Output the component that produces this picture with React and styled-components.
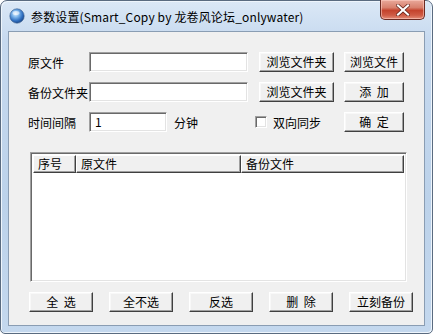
import React from 'react'
import styled, { createGlobalStyle } from 'styled-components'

const GlobalStyle = createGlobalStyle`
	html, body {
		margin: 0;
		padding: 0;
		background: #ffffff;
	}
	body {
		font-family: "Noto Sans CJK SC", "Liberation Sans", sans-serif;
		font-size: 12px;
		color: #000;
	}
`

const Frame = styled.div`
	box-sizing: border-box;
	width: 433px;
	height: 334px;
	display: flex;
	flex-direction: column;
	padding: 0 7px 7px 7px;
	border: 1px solid #5a6b80;
	border-radius: 7px 7px 5px 5px;
	background: linear-gradient(180deg, #dbe8f6 0%, #c6d9ef 12%, #bcd2ea 60%, #c4d8ee 100%);
	box-shadow: inset 1px 1px 0 #eef5fc, inset -1px -1px 0 #eef5fc;
`

const TitleBar = styled.div`
	display: flex;
	align-items: center;
	height: 30px;
	padding-left: 1px;
`

const AppIcon = styled.svg`
	width: 16px;
	height: 16px;
	flex-shrink: 0;
`

const Title = styled.div`
	margin-left: 6px;
	font-size: 12px;
	letter-spacing: 0.15px;
	color: #000;
	white-space: nowrap;
	flex: 1;
`

const CloseButton = styled.div`
	align-self: flex-start;
	margin-top: -1px;
	width: 45px;
	height: 20px;
	box-sizing: border-box;
	border: 1px solid #6b2a22;
	border-top: none;
	border-radius: 0 0 5px 5px;
	background: linear-gradient(180deg, #e9a99b 0%, #d8806d 40%, #c4432d 55%, #cf5b45 80%, #e48d78 100%);
	box-shadow: inset 0 0 0 1px rgba(255, 210, 200, 0.55);
	display: flex;
	align-items: center;
	justify-content: center;
`

const Client = styled.div`
	flex: 1;
	display: flex;
	flex-direction: column;
	background: #f0f0f0;
	border: 1px solid #8a9db3;
	padding: 20px 0 0 19px;
`

const Row = styled.div`
	display: flex;
	align-items: center;
	height: 20px;
	margin-bottom: 10px;
`

const Label = styled.div`
	width: ${p => p.w || 61}px;
	margin-left: ${p => p.ml || 0}px;
	flex-shrink: 0;
	white-space: nowrap;
`

const TextBox = styled.div`
	box-sizing: border-box;
	width: ${p => p.w}px;
	height: 20px;
	background: #fff;
	border: 1px solid;
	border-color: #a0a0a0 #ffffff #ffffff #a0a0a0;
	box-shadow: inset 1px 1px 0 #696969, inset -1px -1px 0 #e3e3e3;
	padding-left: 5px;
	line-height: 18px;
	flex-shrink: 0;
`

const Button = styled.div`
	box-sizing: border-box;
	width: ${p => p.w || 60}px;
	height: 20px;
	margin-left: ${p => p.ml || 0}px;
	flex-shrink: 0;
	background: #f0f0f0;
	border: 1px solid;
	border-color: #ffffff #404040 #404040 #ffffff;
	box-shadow: inset -1px -1px 0 #a0a0a0, inset 1px 1px 0 #f8f8f8;
	display: flex;
	align-items: center;
	justify-content: center;
	white-space: pre;
	word-spacing: 3px;
	line-height: 1;
`

const CheckLabel = styled.div`
	display: flex;
	align-items: center;
	gap: 6px;
	width: 89px;
	flex-shrink: 0;
`

const CheckBox = styled.span`
	box-sizing: border-box;
	width: 12px;
	height: 12px;
	background: #fff;
	border: 1px solid;
	border-color: #a0a0a0 #ffffff #ffffff #a0a0a0;
	box-shadow: inset 1px 1px 0 #696969, inset -1px -1px 0 #e3e3e3;
`

const ListView = styled.div`
	box-sizing: border-box;
	width: 377px;
	height: 130px;
	margin: 10px 0 0 2px;
	background: #fff;
	border: 1px solid;
	border-color: #a0a0a0 #ffffff #ffffff #a0a0a0;
	box-shadow: inset 1px 1px 0 #696969, inset -1px -1px 0 #e3e3e3;
	padding: 2px;
	display: flex;
	flex-direction: column;
`

const Header = styled.div`
	display: flex;
	height: 18px;
`

const HeaderCell = styled.div`
	box-sizing: border-box;
	width: ${p => p.w}px;
	flex: ${p => (p.fill ? 1 : 'none')};
	height: 18px;
	background: #f0f0f0;
	border: 1px solid;
	border-color: #ffffff #404040 #404040 #ffffff;
	box-shadow: inset -1px -1px 0 #a0a0a0;
	padding-left: 4px;
	line-height: 16px;
	white-space: nowrap;
`

const ButtonBar = styled.div`
	display: flex;
	gap: 16px;
	margin: 10px 0 0 1px;
`

export default function App() {
	return (
		<>
			<GlobalStyle />
			<Frame>
				<TitleBar>
					<AppIcon viewBox="0 0 16 16">
						<defs>
							<radialGradient id="globe" cx="40%" cy="35%" r="65%">
								<stop offset="0%" stopColor="#e6f4ff" />
								<stop offset="35%" stopColor="#7fb7ec" />
								<stop offset="75%" stopColor="#2f6fc0" />
								<stop offset="100%" stopColor="#1d4b8f" />
							</radialGradient>
						</defs>
						<circle cx="8" cy="8" r="7.2" fill="url(#globe)" stroke="#3a5f8f" strokeWidth="0.6" />
						<ellipse cx="7" cy="5" rx="3.5" ry="2" fill="#ffffff" opacity="0.55" />
					</AppIcon>
					<Title>参数设置(Smart_Copy by 龙卷风论坛_onlywater)</Title>
					<CloseButton>
						<svg width="14" height="12" viewBox="0 0 14 12">
							<path d="M2 1.5 L12 10.5 M12 1.5 L2 10.5" stroke="#5a1a12" strokeWidth="3.6" strokeLinecap="square" />
							<path d="M2 1.5 L12 10.5 M12 1.5 L2 10.5" stroke="#ffffff" strokeWidth="2.2" strokeLinecap="square" />
						</svg>
					</CloseButton>
				</TitleBar>
				<Client>
					<Row>
						<Label>原文件</Label>
						<TextBox w={159} />
						<Button w={75} ml={11}>浏览文件夹</Button>
						<Button ml={10}>浏览文件</Button>
					</Row>
					<Row>
						<Label>备份文件夹</Label>
						<TextBox w={159} />
						<Button w={75} ml={11}>浏览文件夹</Button>
						<Button ml={10}>添 加</Button>
					</Row>
					<Row>
						<Label>时间间隔</Label>
						<TextBox w={78}>1</TextBox>
						<Label w={81} ml={7}>分钟</Label>
						<CheckLabel>
							<CheckBox />
							<span>双向同步</span>
						</CheckLabel>
						<Button>确 定</Button>
					</Row>
					<ListView>
						<Header>
							<HeaderCell w={43}>序号</HeaderCell>
							<HeaderCell w={165}>原文件</HeaderCell>
							<HeaderCell fill>备份文件</HeaderCell>
						</Header>
					</ListView>
					<ButtonBar>
						<Button w={64}>全 选</Button>
						<Button w={64}>全不选</Button>
						<Button w={64}>反选</Button>
						<Button w={64}>删 除</Button>
						<Button w={64}>立刻备份</Button>
					</ButtonBar>
				</Client>
			</Frame>
		</>
	)
}
